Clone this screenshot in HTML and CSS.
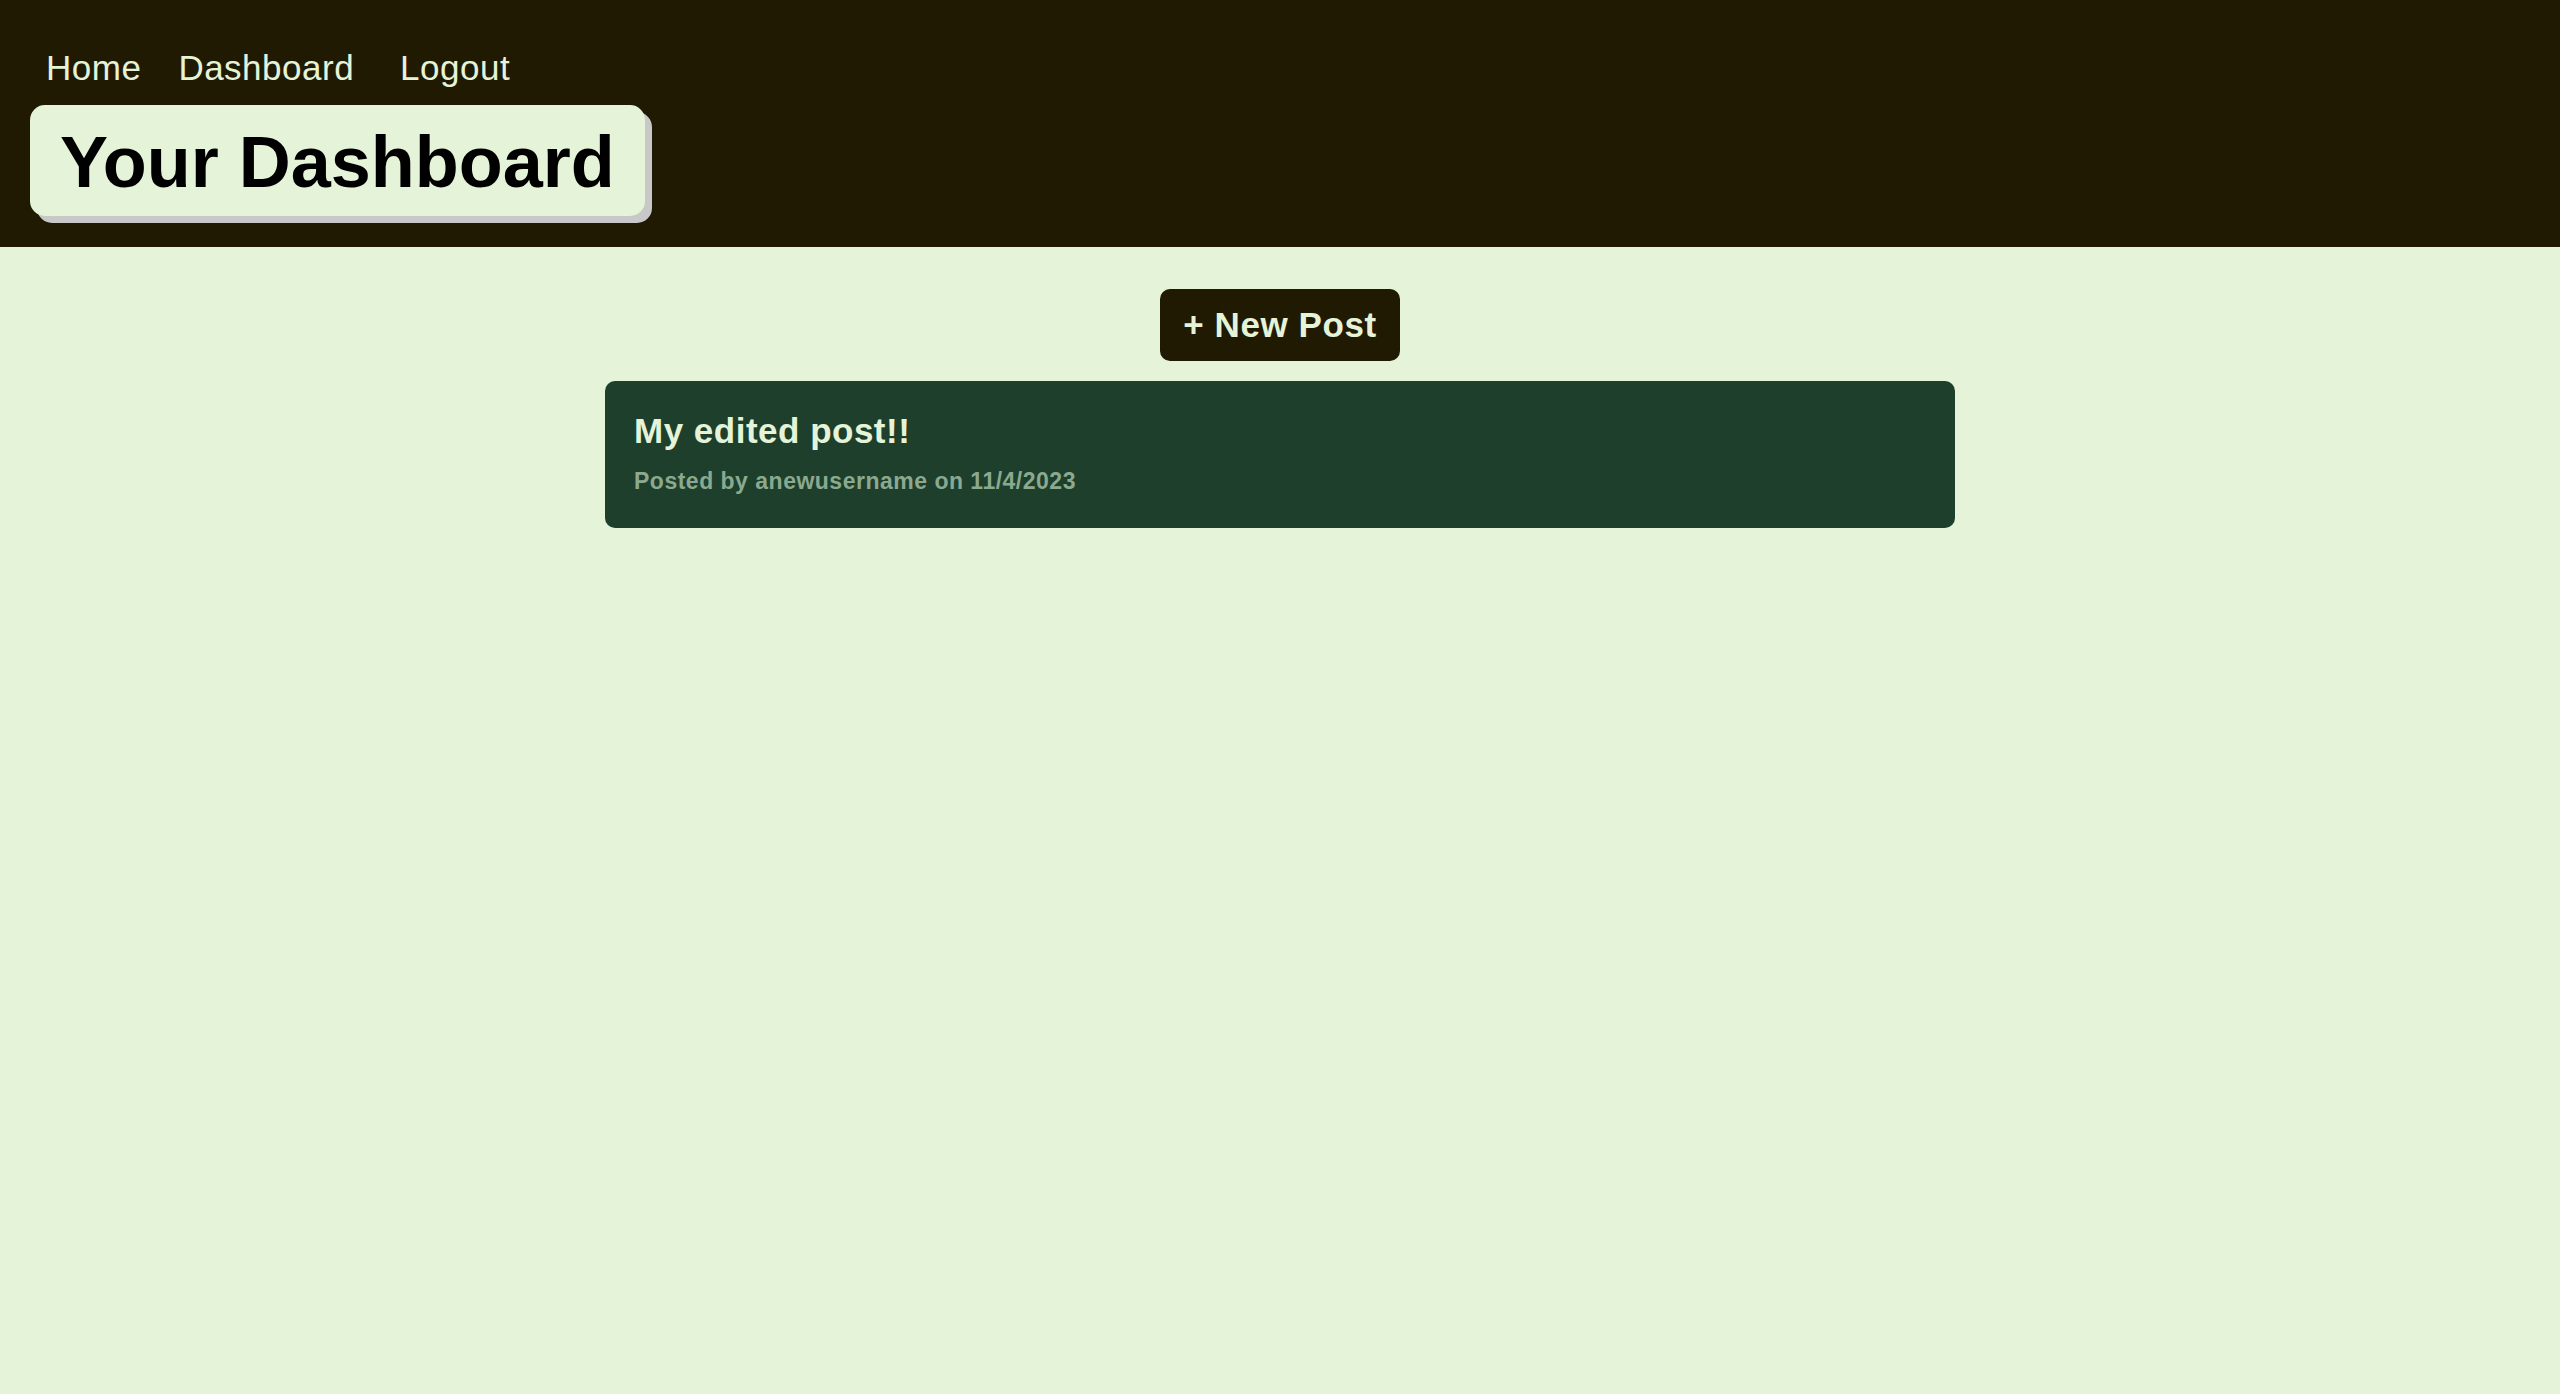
FILE: index.html
```html
<!DOCTYPE html>
<html lang="en">
<head>
<meta charset="utf-8">
<title>Your Dashboard</title>
<link rel="stylesheet" href="styles.css">
</head>
<body>
<header class="site-header">
  <nav class="nav">
    <a class="nav-link nav-home" href="#">Home</a>
    <a class="nav-link nav-dash" href="#">Dashboard</a>
    <a class="nav-link nav-logout" href="#">Logout</a>
  </nav>
  <h1 class="page-title">Your Dashboard</h1>
</header>
<main class="content">
  <a class="new-post" href="#">+ New Post</a>
  <article class="post-card">
    <h2 class="post-title">My edited post!!</h2>
    <p class="post-meta">Posted by anewusername on 11/4/2023</p>
  </article>
</main>
</body>
</html>
```
FILE: styles.css
```css
* { box-sizing: border-box; }

body {
  margin: 0;
  background: #e5f3d8;
  font-family: "Liberation Sans", Arial, sans-serif;
  min-height: 100vh;
}

.site-header {
  background: #201a03;
  padding: 48px 0 31px 30px;
  display: flex;
  flex-direction: column;
  align-items: flex-start;
}

.nav {
  display: flex;
  align-items: baseline;
  padding-left: 16px;
  height: 40px;
  margin-bottom: 17px;
}

.nav-link {
  color: #e5f3d8;
  text-decoration: none;
  font-size: 35px;
  line-height: 40px;
  letter-spacing: 0.5px;
}

.nav-home { margin-right: 37px; }
.nav-dash { margin-right: 46px; }

.page-title {
  margin: 0;
  font-size: 72px;
  font-weight: bold;
  color: #000;
  background: #e5f3d8;
  padding: 16px 30px 12px 30px;
  line-height: 83px;
  border-radius: 15px;
  box-shadow: 7px 7px 0 #c8c8c8;
}

.content {
  display: flex;
  flex-direction: column;
  align-items: center;
  padding-top: 42px;
}

.new-post {
  display: block;
  background: #201a03;
  color: #e5f3d8;
  text-decoration: none;
  font-weight: bold;
  font-size: 35px;
  line-height: 40px;
  letter-spacing: 0.6px;
  padding: 16px 23px;
  border-radius: 10px;
}

.post-card {
  margin-top: 20px;
  width: 1350px;
  background: #1d3f2c;
  border-radius: 10px;
  padding: 30px 29px 34px 29px;
}

.post-title {
  margin: 0 0 17px 0;
  font-size: 35px;
  line-height: 40px;
  font-weight: bold;
  color: #e5f3d8;
  letter-spacing: 0.5px;
}

.post-meta {
  margin: 0;
  font-size: 23px;
  line-height: 26px;
  font-weight: bold;
  color: #8ba98f;
  letter-spacing: 0.5px;
}
```
